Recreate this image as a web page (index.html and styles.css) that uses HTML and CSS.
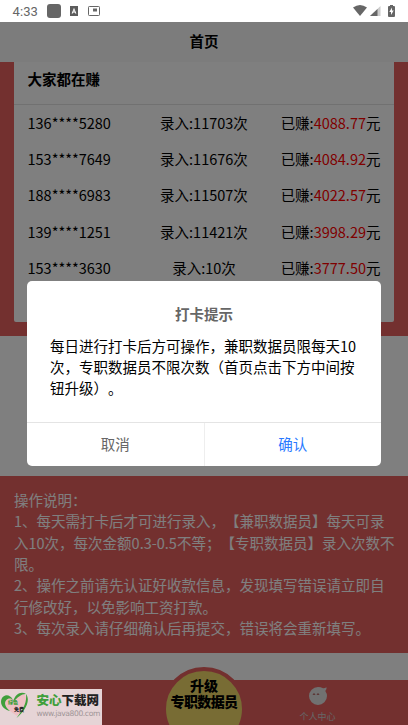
FILE: index.html
```html
<!DOCTYPE html>
<html lang="zh-CN">
<head>
<meta charset="utf-8">
<title>首页</title>
<link rel="stylesheet" href="styles.css">
</head>
<body>
<div class="screen">
  <div class="status">
    <span class="time">4:33</span>
    <span class="app"></span>
    <svg class="notif" width="8" height="10" viewBox="0 0 8 10"><path fill="#5c5c5c" fill-rule="evenodd" d="M0 0h8v10H0zM4 1.700 1.600 7.600h1.200l.5-1.200h1.400l.5 1.200h1.200zM4 3.900l.5 1.500h-1z"/></svg>
    <svg class="pip" width="12" height="10" viewBox="0 0 12 10"><rect x=".5" y=".5" width="11" height="9" rx=".8" fill="none" stroke="#666"/><path fill="#666" d="M5 2.500h4v3H5z"/></svg>
    <div class="signals">
      <svg width="14" height="11" viewBox="0 0 14 11"><path fill="#666" d="M0 2.500Q7-2.500 14 2.500L7 11z"/></svg>
      <svg width="11" height="10" viewBox="0 0 11 10"><path fill="#ccc" d="M0 10 10.500 0v10z"/><path fill="#666" d="M0 10 7.500 3v7z"/></svg>
      <svg class="battery" width="7" height="12" viewBox="0 0 7 12"><path fill="#666" d="M2 0h3v1h1q1 0 1 1v9q0 1-1 1H1q-1 0-1-1V2q0-1 1-1h1z"/><path fill="#fff" d="M4 2.500 1.300 7H3v3l2.700-4.400H4z"/></svg>
    </div>
  </div>
  <header class="nav">首页</header>
  <section class="earn">
    <div class="card">
      <h2>大家都在赚</h2>
      <div class="row"><span>136****5280</span><span>录入:11703次</span><span>已赚:<b>4088.77</b>元</span></div>
      <div class="row"><span>153****7649</span><span>录入:11676次</span><span>已赚:<b>4084.92</b>元</span></div>
      <div class="row"><span>188****6983</span><span>录入:11507次</span><span>已赚:<b>4022.57</b>元</span></div>
      <div class="row"><span>139****1251</span><span>录入:11421次</span><span>已赚:<b>3998.29</b>元</span></div>
      <div class="row"><span>153****3630</span><span>录入:10次</span><span>已赚:<b>3777.50</b>元</span></div>
    </div>
  </section>
  <section class="help">操作说明：<br>1、每天需打卡后才可进行录入，【兼职数据员】每天可录<br>入10次，每次金额0.3-0.5不等；【专职数据员】录入次数不<br>限。<br>2、操作之前请先认证好收款信息，发现填写错误请立即自<br>行修改好，以免影响工资打款。<br>3、每次录入请仔细确认后再提交，错误将会重新填写。</section>
  <nav class="tabs">
    <div class="tab"></div>
    <div class="upgrade"><span class="up">升级</span><span>专职数据员</span></div>
    <div class="tab">
      <svg width="18" height="18" viewBox="0 0 18 18"><path fill="#e2e2e2" d="M9 0q3 0 4.500 1Q15 1.700 17.500.3 18 2 16.300 4 18 6.500 18 9A9 9 0 1 1 9 0z"/><path fill="none" stroke="#b05a58" d="M4 8q1-3 2 0M8 8q1-3 2 0"/></svg>
      <span>个人中心</span>
    </div>
  </nav>
  <div class="mask"></div>
  <div class="dialog">
    <h3>打卡提示</h3>
    <p>每日进行打卡后方可操作，兼职数据员限每天10<br>次，专职数据员不限次数（首页点击下方中间按<br>钮升级）。</p>
    <div class="actions"><span>取消</span><span class="ok">确认</span></div>
  </div>
  <div class="stamp">
    <svg width="30" height="30" viewBox="0 0 30 30"><path fill="#efc0c4" d="M14 9Q19 1 25 4q5 9-8 21Q4 17 4 10q5-6 10-1z"/><path fill="#3f9f3b" d="M13 9C10 3 4 3 1.500 8-.5 14 4 19 10 20 5 16 4 12 6 9.500 8 7 11 7 13 9zM13 11C15 2 22 0 26 3c-5 0-8 3-13 8zM26 3c5 7-1 17-9.500 24C23 18 27 12 26 3z"/><text x="8" y="13" class="g">绿色</text><text x="14" y="20" class="k">免费</text></svg>
    <div class="brand"><div><em>安心</em>下载网</div><small>www.java800.com</small></div>
  </div>
</div>
</body>
</html>
```
FILE: styles.css
```css
* { box-sizing: border-box; }
body { margin: 0; font-family: "Noto Sans CJK SC", sans-serif; font-size: 14.5px; text-spacing-trim: space-all; color: #000; }
.screen { position: relative; width: 408px; height: 725px; overflow: hidden; background: #fff; display: flex; flex-direction: column; }
.status { height: 22px; flex: none; display: flex; align-items: center; padding: 0 13px 0 12.500px; }
.time { font: 13px/22px Roboto, sans-serif; letter-spacing: .1px; color: #666; width: 34.500px; padding-top: 1px; }
.app { width: 14px; height: 14px; border-radius: 3px; background: #666; }
.notif { margin-left: 9px; }
.pip { margin-left: 10px; }
.signals { margin-left: auto; display: flex; align-items: center; gap: 3px; padding-bottom: 1px; }
.battery { margin-left: 4px; }
.nav { height: 40px; flex: none; background: #f8f8f8; text-align: center; line-height: 37px; font-weight: 700; }
.earn { height: 274px; flex: none; background: #e7615f; padding: 0 14px 14px; }
.card { height: 260px; background: #fff; border-radius: 0 0 2px 2px; }
.card h2 { margin: 0; height: 43px; padding-left: 13.500px; font-size: 14.5px; line-height: 33px; font-weight: 700; border-bottom: 1px solid #e2e2e2; }
.row { height: 36.200px; line-height: 35px; padding: 0 13.500px; display: grid; grid-template-columns: 1fr 1fr 1fr; white-space: nowrap; }
.row span:nth-child(2) { text-align: center; }
.row span:nth-child(3) { text-align: right; }
.row b { font-weight: 400; color: #f00; }
.help { margin-top: 140px; height: 176.500px; flex: none; background: #e7615f; color: #fff; padding: 13px 0 0 14px; line-height: 21.330px; white-space: nowrap; }
.tabs { margin-top: 27.500px; flex: 1; display: flex; justify-content: space-between; background: #e7615f; position: relative; }
.tab { width: 181px; display: flex; flex-direction: column; align-items: center; padding-top: 7px; font-size: 9px; color: #ccc; line-height: 13px; gap: 5px; }
.upgrade { position: absolute; left: 162px; top: -13px; width: 84px; height: 84px; border-radius: 50%; border: 4px solid #e7615f; background: #f0d868; display: flex; flex-direction: column; align-items: center; padding-top: 7px; font-size: 14px; line-height: 15.500px; font-weight: 900; white-space: nowrap; letter-spacing: -.6px; }
.up { letter-spacing: 0; }
.mask { position: absolute; left: 0; top: 22px; right: 0; bottom: 0; background: rgba(0, 0, 0, .5); }
.dialog { position: absolute; left: 27px; top: 280.500px; width: 354px; height: 185.500px; border-radius: 5px; background: #fff; display: flex; flex-direction: column; overflow: hidden; }
.dialog h3 { margin: 22px 0 0; text-align: center; font-size: 14.5px; line-height: 21px; color: #666; }
.dialog p { margin: 11px 0 0 23px; line-height: 21.330px; white-space: nowrap; }
.actions { margin-top: auto; height: 44px; display: flex; border-top: 1px solid #e4e4e4; line-height: 41px; color: #666; text-align: center; }
.actions span { flex: 1; }
.actions .ok { color: #2979ff; border-left: 1px solid #eee; }
.stamp { position: absolute; left: 0; top: 689px; width: 102px; height: 36px; background: #e6d4d6; display: flex; padding-top: 2px; }
.stamp text { font-size: 5px; font-weight: 900; }
.g { fill: #3f9f3b; }
.k { fill: #222; }
.brand { padding-left: 6.500px; font-size: 12.500px; line-height: 18px; font-weight: 900; color: #222; white-space: nowrap; }
.brand em { font-style: normal; color: #3f9f3b; }
.brand small { display: block; font: 7.600px/10px "DejaVu Sans", sans-serif; letter-spacing: -.4px; color: #a09496; }
```
